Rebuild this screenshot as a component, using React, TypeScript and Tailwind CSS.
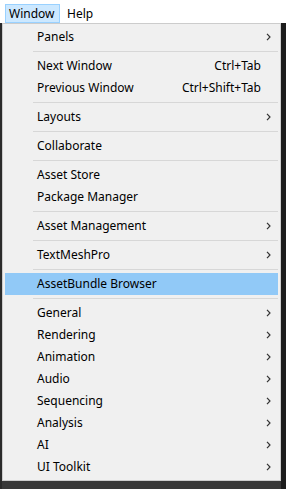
import React from "react";

type Item =
  | { type: "item"; label: string; shortcut?: string; sub?: boolean; active?: boolean }
  | { type: "sep" };

const items: Item[] = [
  { type: "item", label: "Panels", sub: true },
  { type: "sep" },
  { type: "item", label: "Next Window", shortcut: "Ctrl+Tab" },
  { type: "item", label: "Previous Window", shortcut: "Ctrl+Shift+Tab" },
  { type: "sep" },
  { type: "item", label: "Layouts", sub: true },
  { type: "sep" },
  { type: "item", label: "Collaborate" },
  { type: "sep" },
  { type: "item", label: "Asset Store" },
  { type: "item", label: "Package Manager" },
  { type: "sep" },
  { type: "item", label: "Asset Management", sub: true },
  { type: "sep" },
  { type: "item", label: "TextMeshPro", sub: true },
  { type: "sep" },
  { type: "item", label: "AssetBundle Browser", active: true },
  { type: "sep" },
  { type: "item", label: "General", sub: true },
  { type: "item", label: "Rendering", sub: true },
  { type: "item", label: "Animation", sub: true },
  { type: "item", label: "Audio", sub: true },
  { type: "item", label: "Sequencing", sub: true },
  { type: "item", label: "Analysis", sub: true },
  { type: "item", label: "AI", sub: true },
  { type: "item", label: "UI Toolkit", sub: true },
];

function Chevron() {
  return (
    <svg width="5" height="8" viewBox="0 0 5 8" className="block">
      <path d="M1 0.8 L4 4 L1 7.2" fill="none" stroke="#333" strokeWidth="1.2" />
    </svg>
  );
}

export default function App() {
  const font = { fontFamily: '"Noto Sans", "Noto Sans CJK KR", sans-serif' };
  return (
    <div className="w-[286px] h-[489px] bg-[#383838] flex flex-col overflow-hidden" style={font}>
      <div className="h-[23px] bg-white flex items-end text-[12px] text-black shrink-0">
        <div className="ml-[5px] h-[19px] w-[55px] bg-[#cce8ff] border border-[#99d1ff] flex items-center pl-[3px]">
          Window
        </div>
        <div className="ml-[7px] h-[19px] flex items-center">Help</div>
      </div>
      <div className="flex flex-1 items-start">
        <div className="w-[2px] self-stretch bg-[#2a2a2a]" />
        <div className="w-[279px] bg-[#f0f0f0] border border-[#cccccc] pt-[2px] pb-[2px] px-[2px] text-[12px] text-black">
          {items.map((it, i) =>
            it.type === "sep" ? (
              <div key={i} className="h-[7px] flex items-center pl-[28px]">
                <div className="h-px w-full bg-[#d7d7d7]" />
              </div>
            ) : (
              <div
                key={i}
                className={`h-[22px] flex items-center pl-[32px] pr-[7px] ${it.active ? "bg-[#91c9f7]" : ""}`}
              >
                <span className="flex-1 leading-none">{it.label}</span>
                {it.shortcut && <span className="mr-[10px] leading-none">{it.shortcut}</span>}
                {it.sub && <Chevron />}
              </div>
            )
          )}
        </div>
        <div className="flex-1 self-stretch bg-[#1c1c1c]" />
      </div>
    </div>
  );
}
